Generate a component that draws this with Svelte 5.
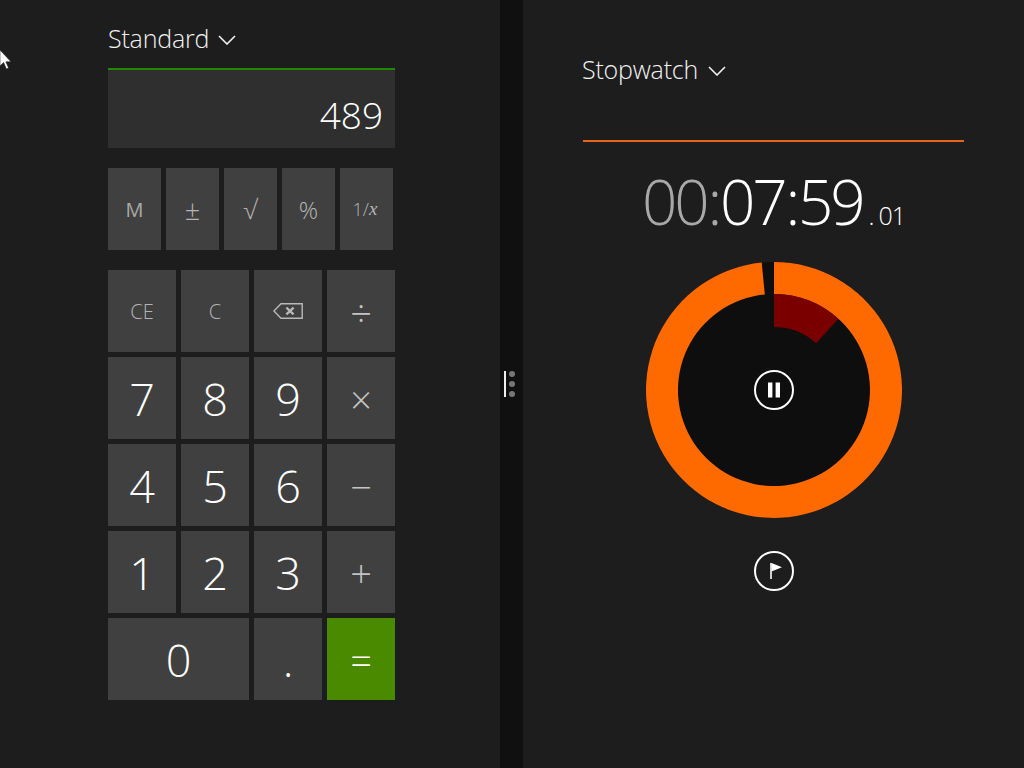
<script>
  const memKeys = [
    { label: 'M', cls: 'm' },
    { label: '±', cls: 'pm' },
    { label: '√', cls: 'root' },
    { label: '%', cls: 'pct' },
    { label: '1/', em: 'x', cls: 'frac' }
  ];
  const keys = [
    { label: 'CE', cls: 'small' },
    { label: 'C', cls: 'small' },
    { icon: true, cls: 'small' },
    { label: '÷', cls: 'op' },
    { label: '7', cls: 'num' },
    { label: '8', cls: 'num' },
    { label: '9', cls: 'num' },
    { label: '×', cls: 'op' },
    { label: '4', cls: 'num' },
    { label: '5', cls: 'num' },
    { label: '6', cls: 'num' },
    { label: '−', cls: 'op' },
    { label: '1', cls: 'num' },
    { label: '2', cls: 'num' },
    { label: '3', cls: 'num' },
    { label: '+', cls: 'op' },
    { label: '0', cls: 'num zero' },
    { label: '.', cls: 'num' },
    { label: '=', cls: 'op equals' }
  ];

  const C = 128;
  function pt(r, a) {
    const t = (a * Math.PI) / 180;
    return `${(C + r * Math.sin(t)).toFixed(2)} ${(C - r * Math.cos(t)).toFixed(2)}`;
  }
  function sector(r0, r1, a0, a1) {
    const large = a1 - a0 > 180 ? 1 : 0;
    return `M${pt(r1, a0)}A${r1} ${r1} 0 ${large} 1 ${pt(r1, a1)}L${pt(r0, a1)}A${r0} ${r0} 0 ${large} 0 ${pt(r0, a0)}Z`;
  }
  const ringPath = sector(96, 128, 0, 354.5);
  const lapPath = sector(63, 96, 0, 42);
</script>

<div class="screen">
  <svg class="cursor" width="13" height="22" viewBox="0 0 13 22" aria-hidden="true">
    <path d="M0 0V16L3.6 12.6L6.4 19L8.6 18L5.9 11.8H11Z" fill="#fff" stroke="#222" stroke-width="0.6" />
  </svg>

  <section class="calc">
    <header class="title">Standard <svg class="chev" width="18" height="10" viewBox="0 0 18 10"><path d="M1 1L9 9L17 1" /></svg></header>
    <div class="display">489</div>
    <div class="mem">
      {#each memKeys as k}
        <button class="key {k.cls}">{k.label}{#if k.em}<em>{k.em}</em>{/if}</button>
      {/each}
    </div>
    <div class="pad">
      {#each keys as k}
        <button class="key {k.cls}">
          {#if k.icon}
            <svg width="30" height="16" viewBox="0 0 30 16" fill="none" stroke="#b9b9b9">
              <path d="M29.2 0.8H8L0.9 8L8 15.2H29.2Z" stroke-width="1.4" />
              <path d="M13.4 4.6L20.6 11.4M20.6 4.6L13.4 11.4" stroke-width="2.2" />
            </svg>
          {:else}
            {k.label}
          {/if}
        </button>
      {/each}
    </div>
  </section>

  <div class="divider">
    <span class="bar"></span>
    <span class="dots"><i></i><i></i><i></i></span>
  </div>

  <section class="watch">
    <header class="title">Stopwatch <svg class="chev" width="18" height="10" viewBox="0 0 18 10"><path d="M1 1L9 9L17 1" /></svg></header>
    <div class="rule"></div>
    <div class="time"><span class="dim">00<span class="colon">:</span></span>07<span class="colon">:</span>59<small><span class="pt">.</span>01</small></div>
    <div class="dial">
      <svg width="256" height="256" viewBox="0 0 256 256">
        <circle cx="128" cy="128" r="128" fill="#0e0e0e" />
        <path d={ringPath} fill="#ff6a00" />
        <path d={lapPath} fill="#7a0000" />
      </svg>
      <button class="round over" aria-label="Pause">
        <svg width="14" height="16" viewBox="0 0 14 16"><rect x="1" y="0.5" width="4.4" height="15" fill="#fff" /><rect x="8.6" y="0.5" width="4.4" height="15" fill="#fff" /></svg>
      </button>
    </div>
    <button class="round lap" aria-label="Lap">
      <svg class="flag" width="14" height="18" viewBox="0 0 14 18"><path d="M1 1V17" stroke="#fff" stroke-width="1.6" /><path d="M1.5 1L12 5.2L1.5 9.6Z" fill="#fff" /></svg>
    </button>
  </section>
</div>

<style>
  :global(body) {
    margin: 0;
    background: #1d1d1d;
  }
  .screen {
    position: relative;
    display: flex;
    width: 1024px;
    height: 768px;
    overflow: hidden;
    background: #1d1d1d;
    color: #fff;
    font-family: "Open Sans", "Noto Sans", "Liberation Sans", sans-serif;
    font-weight: 300;
  }
  .cursor {
    position: absolute;
    left: 0;
    top: 50px;
  }
  .title {
    display: flex;
    align-items: center;
    gap: 9px;
    font-size: 25px;
    letter-spacing: -0.2px;
    line-height: 34px;
    color: #f2f2f2;
  }
  .chev {
    margin-top: 3px;
    fill: none;
    stroke: #f2f2f2;
    stroke-width: 1.6;
  }
  .calc {
    box-sizing: border-box;
    width: 500px;
    padding: 21px 0 0 108px;
  }
  .display {
    box-sizing: border-box;
    width: 287px;
    height: 80px;
    margin-top: 13px;
    padding-right: 12px;
    border-top: 2px solid #1f8a00;
    background: #2f2f2f;
    font-size: 37px;
    line-height: 90px;
    text-align: right;
  }
  .mem {
    display: flex;
    gap: 5px;
    margin-top: 20px;
  }
  .mem .key {
    width: 53px;
    height: 82px;
  }
  .pad {
    display: grid;
    grid-template-columns: repeat(4, 68px);
    grid-auto-rows: 82px;
    gap: 5px;
    margin-top: 20px;
  }
  .key {
    display: flex;
    align-items: center;
    justify-content: center;
    padding: 0;
    border: 0;
    background: #404040;
    color: #b4b4b4;
    font: inherit;
  }
  .m {
    color: #aaa;
    font-size: 20px;
    font-weight: 400;
  }
  .pm {
    font-size: 27px;
  }
  .root {
    font-size: 26px;
  }
  .pct {
    font-size: 24px;
  }
  .frac {
    padding-right: 3px;
    font-size: 18px;
  }
  .frac em {
    font-family: "Liberation Serif", serif;
    font-size: 19px;
    font-style: italic;
  }
  .small {
    font-size: 20px;
  }
  .op {
    padding-top: 2px;
    color: #c4c4c4;
    font-size: 38px;
  }
  .num {
    color: #fff;
    font-size: 45px;
  }
  .zero {
    grid-column: span 2;
  }
  .equals {
    background: #4a8a00;
    color: #fff;
  }
  .divider {
    box-sizing: border-box;
    display: flex;
    align-items: center;
    gap: 3px;
    width: 23px;
    padding-left: 4px;
    background: #101010;
  }
  .bar {
    width: 2px;
    height: 26px;
    background: #eee;
  }
  .dots {
    display: flex;
    flex-direction: column;
    gap: 4px;
  }
  .dots i {
    width: 6px;
    height: 6px;
    border-radius: 50%;
    background: #777;
  }
  .watch {
    display: flex;
    flex: 1;
    flex-direction: column;
    align-items: center;
    padding-top: 52px;
    box-sizing: border-box;
  }
  .watch .title {
    align-self: flex-start;
    gap: 10px;
    margin-left: 59px;
  }
  .rule {
    align-self: flex-start;
    flex: none;
    width: 381px;
    height: 2px;
    margin: 54px 0 0 60px;
    background: #e8641c;
  }
  .time {
    margin-top: 23px;
    font-size: 62px;
    letter-spacing: -3.2px;
    line-height: 72px;
    white-space: nowrap;
  }
  .dim {
    color: #a8a8a8;
  }
  .colon {
    margin: 0 1px;
  }
  .time small {
    margin-left: 6px;
    font-size: 25px;
    letter-spacing: -1px;
    line-height: 0;
  }
  .pt {
    margin-right: 5px;
  }
  .dial {
    position: relative;
    flex: none;
    width: 256px;
    height: 256px;
    margin-top: 25px;
  }
  .dial svg {
    display: block;
  }
  .round {
    box-sizing: border-box;
    display: flex;
    align-items: center;
    justify-content: center;
    flex: none;
    width: 40px;
    height: 40px;
    padding: 0;
    border: 2px solid #fff;
    border-radius: 50%;
    background: transparent;
  }
  .over {
    position: absolute;
    left: 108px;
    top: 108px;
  }
  .lap {
    margin-top: 33px;
  }
  .flag {
    margin-left: 6px;
  }
</style>
